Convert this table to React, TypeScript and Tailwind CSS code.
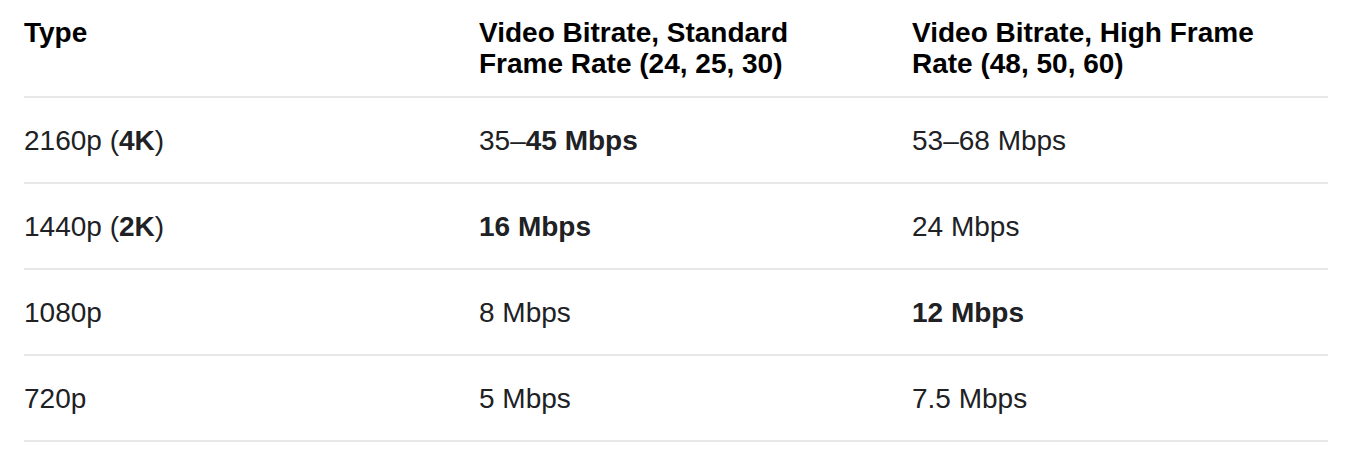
const rows: { type: React.ReactNode; standard: React.ReactNode; high: React.ReactNode }[] = [
  {
    type: (
      <>
        2160p (<b className="font-bold">4K</b>)
      </>
    ),
    standard: (
      <>
        35–<b className="font-bold">45 Mbps</b>
      </>
    ),
    high: "53–68 Mbps",
  },
  {
    type: (
      <>
        1440p (<b className="font-bold">2K</b>)
      </>
    ),
    standard: <b className="font-bold">16 Mbps</b>,
    high: "24 Mbps",
  },
  {
    type: "1080p",
    standard: "8 Mbps",
    high: <b className="font-bold">12 Mbps</b>,
  },
  {
    type: "720p",
    standard: "5 Mbps",
    high: "7.5 Mbps",
  },
];

export default function App() {
  return (
    <div className="min-h-screen bg-white px-[24px] font-['Liberation_Sans',Arial,sans-serif]">
      <table className="w-[1304px] table-fixed border-collapse text-[28px] leading-[31px]">
        <colgroup>
          <col className="w-[455px]" />
          <col className="w-[433px]" />
          <col />
        </colgroup>
        <thead>
          <tr className="border-b-2 border-[#e8e8e8]">
            <th className="pt-[17px] pb-[17px] text-left align-top font-bold text-black">Type</th>
            <th className="pt-[17px] pb-[17px] text-left align-top font-bold text-black">
              Video Bitrate, Standard
              <br />
              Frame Rate (24, 25, 30)
            </th>
            <th className="pt-[17px] pb-[17px] text-left align-top font-bold text-black">
              Video Bitrate, High Frame
              <br />
              Rate (48, 50, 60)
            </th>
          </tr>
        </thead>
        <tbody className="text-[#202124]">
          {rows.map((row, i) => (
            <tr key={i} className="border-b-2 border-[#e8e8e8]">
              <td className="pt-[27px] pb-[26px] align-top">{row.type}</td>
              <td className="pt-[27px] pb-[26px] align-top">{row.standard}</td>
              <td className="pt-[27px] pb-[26px] align-top">{row.high}</td>
            </tr>
          ))}
        </tbody>
      </table>
    </div>
  );
}
